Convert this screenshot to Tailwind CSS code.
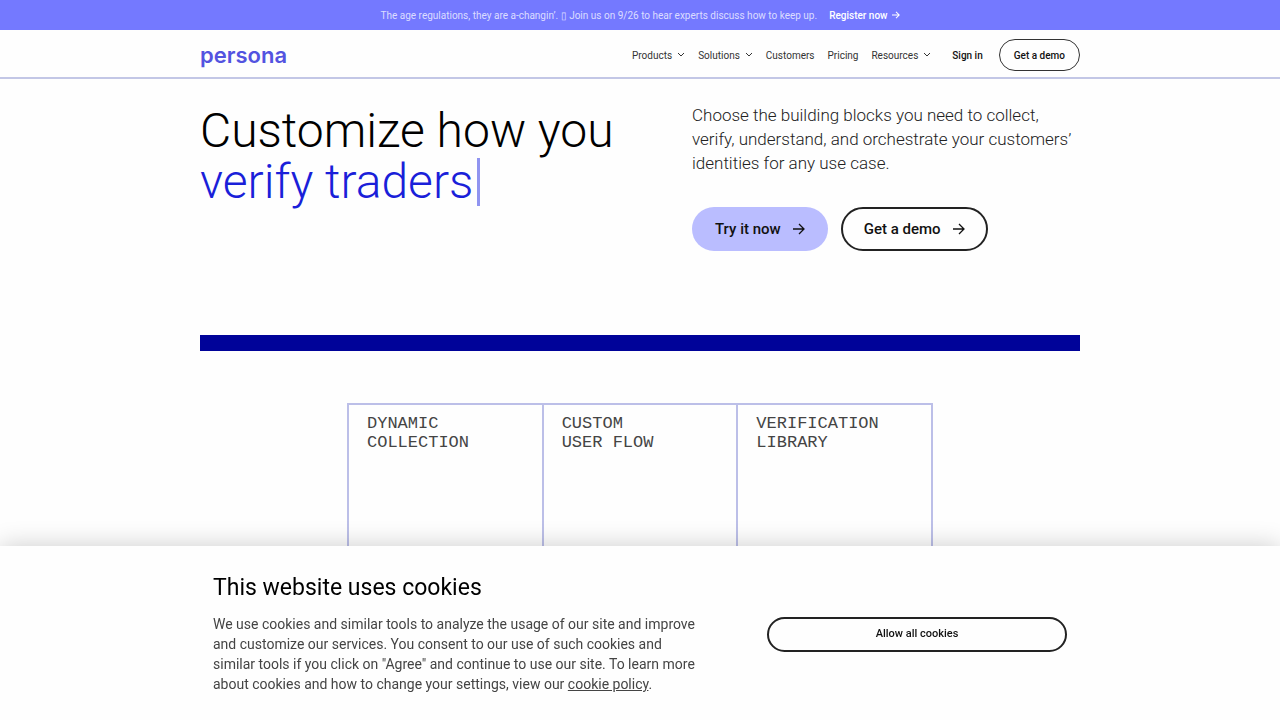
<!DOCTYPE html>
<html lang="en">

<head>
    <meta charset="UTF-8">
    <meta name="viewport" content="width=device-width, initial-scale=1.0">
    <title>Persona</title>
    <script src="https://cdn.jsdelivr.net/npm/@tailwindcss/browser@4"></script>
</head>

<body class="min-h-screen overflow-x-hidden bg-[#fefefe] font-['Roboto','Liberation_Sans',sans-serif] text-[#111111]">

    <!-- Announcement -->
    <div class="flex h-[30px] items-center justify-center gap-3 bg-[#7479ff] text-[10px] text-white">
        <p class="text-white/75">The age regulations, they are a-changin’. ▯ Join us on 9/26 to hear experts discuss how to keep up.</p>
        <a href="#" class="flex items-center gap-1 font-medium">Register now
            <svg class="size-2" viewBox="0 0 10 10" fill="none" stroke="currentColor" stroke-width="1.3"><path d="M0 5h9M5 1l4 4-4 4" /></svg>
        </a>
    </div>

    <!-- Header -->
    <header class="h-[49px] border-b-2 border-[#c3c7e6] px-6 pt-[3px]">
        <div class="mx-auto flex h-full max-w-[880px] items-center justify-between">
            <a href="#" class="text-[22px] leading-6 font-['Inter',sans-serif] font-semibold text-[#5353e0]">persona</a>
            <nav class="flex items-center gap-[13px] text-[10px] text-[#333333]">
                <button type="button" class="flex items-center gap-[5px]">Products
                    <svg class="size-2" viewBox="0 0 8 8" fill="none" stroke="currentColor"><path d="M1 2l3 3 3-3" /></svg>
                </button>
                <button type="button" class="flex items-center gap-[5px]">Solutions
                    <svg class="size-2" viewBox="0 0 8 8" fill="none" stroke="currentColor"><path d="M1 2l3 3 3-3" /></svg>
                </button>
                <a href="#">Customers</a>
                <a href="#">Pricing</a>
                <button type="button" class="flex items-center gap-[5px]">Resources
                    <svg class="size-2" viewBox="0 0 8 8" fill="none" stroke="currentColor"><path d="M1 2l3 3 3-3" /></svg>
                </button>
                <a href="#" class="mx-2 mr-[3px] font-medium text-[#111111]">Sign in</a>
                <a href="#" class="flex h-8 items-center rounded-full border border-[#333333] px-[14px] font-medium text-[#111111]">Get a demo</a>
            </nav>
        </div>
    </header>

    <main class="px-6">
        <!-- Hero -->
        <section class="mx-auto grid max-w-[880px] grid-cols-[1fr_388px] pt-6">
            <h1 class="pt-[2px] text-[48px] leading-[51px] font-light text-black">Customize how you<br>
                <span class="inline-flex items-center gap-1 text-[#1a1fd9]">verify traders<span class="h-12 w-[3px] bg-[#9094f0]"></span></span>
            </h1>
            <div>
                <p class="text-[17px] leading-6 font-light text-[#222222]">Choose the building blocks you need to collect,<br>verify, understand, and orchestrate your customers’<br>identities for any use case.</p>
                <div class="mt-8 flex gap-[13px] text-[15px] font-medium">
                    <a href="#" class="flex h-11 items-center gap-3 rounded-full bg-[#babdff] px-[23px]">Try it now
                        <svg class="size-3" viewBox="0 0 12 12" fill="none" stroke="currentColor" stroke-width="1.3"><path d="M0 6h11M6 1l5 5-5 5" /></svg>
                    </a>
                    <a href="#" class="flex h-11 items-center gap-3 rounded-full border-2 border-[#222222] px-[21px]">Get a demo
                        <svg class="size-3" viewBox="0 0 12 12" fill="none" stroke="currentColor" stroke-width="1.3"><path d="M0 6h11M6 1l5 5-5 5" /></svg>
                    </a>
                </div>
            </div>
        </section>

        <div class="mx-auto mt-[84px] h-4 max-w-[880px] bg-[#000399]"></div>

        <!-- Building blocks -->
        <section class="mx-auto mt-[52px] grid h-80 max-w-[586px] grid-cols-3 border-2 border-r-0 border-[#bcbfe8] font-['Liberation_Mono',monospace] text-[17px] leading-[19px] text-[#444444]">
            <h2 class="border-r-2 border-[#bcbfe8] px-[18px] pt-[9px]">DYNAMIC<br>COLLECTION</h2>
            <h2 class="border-r-2 border-[#bcbfe8] px-[18px] pt-[9px]">CUSTOM<br>USER FLOW</h2>
            <h2 class="border-r-2 border-[#bcbfe8] px-[18px] pt-[9px]">VERIFICATION<br>LIBRARY</h2>
        </section>
    </main>

    <!-- Cookie notice -->
    <div class="fixed inset-x-0 bottom-0 bg-[#fefefe] px-6 pt-7 pb-[26px] shadow-[0_0_24px_rgba(0,0,0,0.2)]">
        <div class="mx-auto grid max-w-[854px] grid-cols-[1fr_300px] items-center gap-16">
            <div>
                <h2 class="text-[23px] leading-7 text-black">This website uses cookies</h2>
                <p class="mt-3 text-[14px] leading-5 text-[#444444]">We use cookies and similar tools to analyze the usage of our site and improve<br>and customize our services. You consent to our use of such cookies and<br>similar tools if you click on "Agree" and continue to use our site. To learn more<br>about cookies and how to change your settings, view our <a href="#" class="underline">cookie policy</a>.</p>
            </div>
            <button type="button" class="h-[35px] rounded-full border-2 border-[#222222] text-[11px] font-medium">Allow all cookies</button>
        </div>
    </div>

</body>

</html>
